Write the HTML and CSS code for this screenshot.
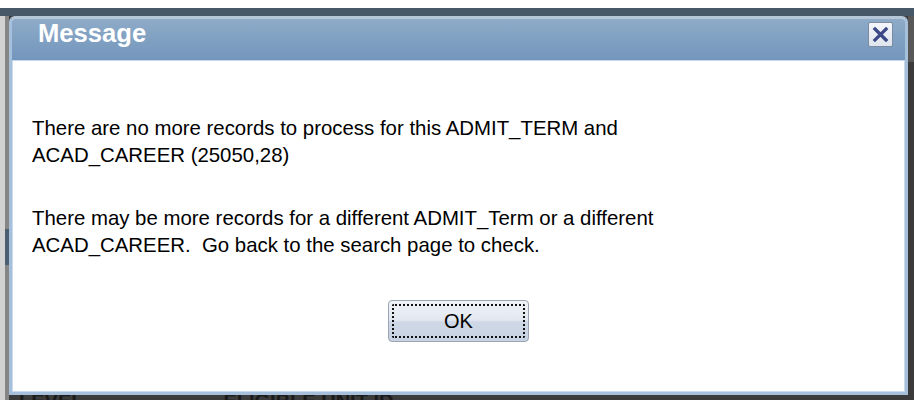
FILE: index.html
```html
<!DOCTYPE html>
<html lang="en">
<head>
<meta charset="utf-8">
<title>Message</title>
<link rel="stylesheet" href="styles.css">
</head>
<body>
<div class="screen">
  <div class="dialog" role="dialog" aria-labelledby="msg-title">
    <div class="titlebar">
      <span class="title" id="msg-title">Message</span>
      <button class="close" type="button" aria-label="Close">
        <svg viewBox="0 0 25 25" width="25" height="25" aria-hidden="true">
          <path d="M6.5 6.5 L18.5 18.5 M18.5 6.5 L6.5 18.5" stroke="#3b4a86" stroke-width="3.6" stroke-linecap="square"/>
        </svg>
      </button>
    </div>
    <div class="content">
      <p>There are no more records to process for this ADMIT_TERM and<br>ACAD_CAREER (25050,28)</p>
      <p>There may be more records for a different ADMIT_Term or a different<br>ACAD_CAREER.&nbsp; Go back to the search page to check.</p>
      <div class="actions">
        <button class="ok" type="button"><span class="ok-label">OK</span></button>
      </div>
    </div>
  </div>
  <div class="under">
    <span class="under-a">LEVEL</span>
    <span class="under-b">ELIGIBLE UNIT ID</span>
  </div>
</div>
</body>
</html>
```

FILE: styles.css
```css
html, body {
  margin: 0;
  padding: 0;
}

body {
  width: 914px;
  height: 400px;
  overflow: hidden;
  font-family: "Liberation Sans", Arial, sans-serif;
}

/* dimmed page behind the modal */
.screen {
  box-sizing: border-box;
  height: 400px;
  display: flex;
  flex-direction: column;
  padding: 16px 6px 0 9px;
  background:
    linear-gradient(#ffffff, #ffffff) 0 0 / 100% 8px no-repeat,
    linear-gradient(#475868, #475868) 0 8px / 100% 8px no-repeat,
    linear-gradient(#4b5e72, #4b5e72) 5px 229px / 4px 36px no-repeat,
    linear-gradient(to right, #d2d2d2 0 5px, #858585 5px 9px, transparent 9px),
    linear-gradient(to right, transparent 908px, #585858 908px) 0 16px / 100% 46px no-repeat,
    #3b3b3b;
}

.dialog {
  flex: 1;
  display: flex;
  flex-direction: column;
  background: #ffffff;
  border: 3px solid #a6c0dc;
  border-top-color: #b4c6d8;
  border-radius: 6px 6px 0 0;
  box-shadow: inset 0 -1px 0 #cbdaea, inset -1px 0 0 #cbdaea, inset 1px 0 0 #cbdaea;
  overflow: hidden;
}

.titlebar {
  display: flex;
  justify-content: space-between;
  height: 41px;
  padding: 0 12px 0 26px;
  background: linear-gradient(#8eabc8, #7396bc);
  border-bottom: 1px solid #c6d6e8;
}

.title {
  margin-top: 2px;
  color: #ffffff;
  font-weight: bold;
  font-size: 25.6px;
  line-height: 25px;
}

.close {
  width: 25px;
  height: 25px;
  margin-top: 3px;
  padding: 0;
  border: 1px solid #7d8ba0;
  border-radius: 2px;
  background: linear-gradient(#f4f6fa, #dfe5ee);
  display: flex;
  align-items: center;
  justify-content: center;
}

.close svg {
  display: block;
}

.content {
  flex: 1;
  padding: 54px 20px 0 20px;
  color: #000000;
  font-size: 20.4px;
  line-height: 27px;
}

.content p {
  margin: 0 0 36px 0;
}

.content p + p {
  margin-bottom: 41px;
}

.actions {
  display: flex;
  justify-content: center;
}

.ok {
  width: 141px;
  height: 42px;
  padding: 3px;
  border: 1px solid #9aa4b2;
  border-radius: 4px;
  background: linear-gradient(#f0f3f8 0%, #e3e8f0 48%, #cfd8e6 52%, #c7d2e2 100%);
  font-family: "Liberation Sans", Arial, sans-serif;
  font-size: 20px;
  color: #000000;
}

.ok-label {
  display: flex;
  align-items: center;
  justify-content: center;
  height: 100%;
  box-sizing: border-box;
  border: 2px dotted #111111;
  border-radius: 2px;
}

/* column headings of the page underneath, cut off by the modal */
.under {
  height: 5px;
  overflow: hidden;
  display: flex;
  font-weight: bold;
  font-size: 20px;
  line-height: 12px;
  color: #1a1a1a;
}

.under-a {
  margin-left: 10px;
}

.under-b {
  margin-left: 140px;
}
```
